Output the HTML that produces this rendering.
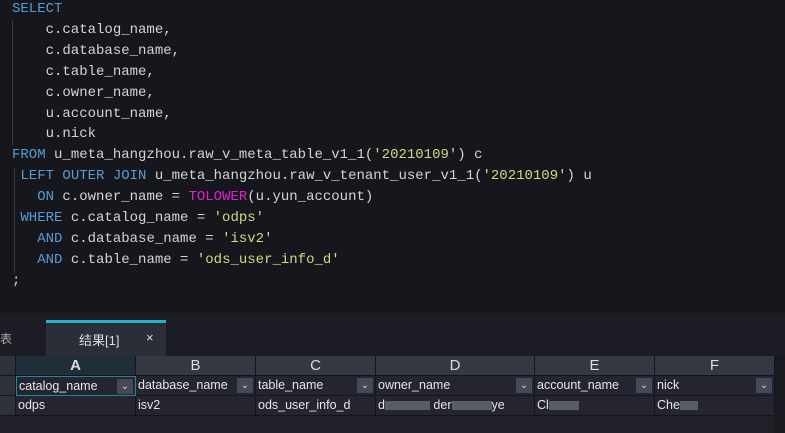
<!DOCTYPE html>
<html><head><meta charset="utf-8"><style>
*{margin:0;padding:0;box-sizing:border-box}
body{width:785px;height:433px;background:#16171c;overflow:hidden;position:relative;font-family:"Liberation Sans","Noto Sans CJK SC",sans-serif}
pre{position:absolute;left:12px;top:-1px;font-family:"Liberation Mono",monospace;font-size:14px;line-height:20.9px;color:#d4d4d4}
.k{color:#569cd6}.s{color:#d7d780}.f{color:#e31ed6}
.guide{position:absolute;left:12px;width:1px;background:#3a3b42}
.panel{position:absolute;left:0;top:313px;width:785px;height:120px;background:#1f2028}
.tabbar{position:absolute;left:0;top:313px;width:785px;height:43px;background:#1c1d24}
.tab{position:absolute;left:46px;top:320px;width:120px;height:36px;background:#2b2d37;border-top:3px solid #1fb3d0;color:#ddd;font-size:13px}
.cell{position:absolute;font-size:12.5px;color:#e6e6e6;border-right:1px solid #14151a;border-bottom:1px solid #14151a;padding-left:2px;line-height:19px;white-space:nowrap;overflow:hidden}
.hd{background:#353743;text-align:center;font-size:15px;color:#ddd;padding:0}
.r{background:#242530}
.dd{position:absolute;right:2px;top:2px;width:16px;height:15px;background:#454855;color:#ddd;font-size:10px;text-align:center;line-height:15px}
.blur{display:inline-block;background:#5a5d66;height:9px;vertical-align:middle}
</style></head><body>
<div class="guide" style="top:20px;height:125px"></div>
<div class="guide" style="top:168px;height:105px;left:14px"></div>
<pre><span class="k">SELECT</span>
    c.catalog_name,
    c.database_name,
    c.table_name,
    c.owner_name,
    u.account_name,
    u.nick
<span class="k">FROM</span> u_meta_hangzhou.raw_v_meta_table_v1_1(<span class="s">'20210109'</span>) c
 <span class="k">LEFT OUTER JOIN</span> u_meta_hangzhou.raw_v_tenant_user_v1_1(<span class="s">'20210109'</span>) u
   <span class="k">ON</span> c.owner_name = <span class="f">TOLOWER</span>(u.yun_account)
 <span class="k">WHERE</span> c.catalog_name = <span class="s">'odps'</span>
   <span class="k">AND</span> c.database_name = <span class="s">'isv2'</span>
   <span class="k">AND</span> c.table_name = <span class="s">'ods_user_info_d'</span>
;</pre>
<div class="panel"></div>
<div class="tabbar"></div>
<div style="position:absolute;left:0;top:330px;color:#aaa;font-size:12px">表</div>
<div class="tab"><span style="position:absolute;left:33px;top:7px">结果[1]</span><span style="position:absolute;left:100px;top:7px">×</span></div>
<div class="cell hd" style="left:0;top:356px;width:16px;height:20px;background:#2f313b"></div>
<div class="cell hd" style="left:16px;top:356px;width:120px;height:20px;background:#1f2e38;font-weight:bold">A</div>
<div class="cell hd" style="left:136px;top:356px;width:120px;height:20px">B</div>
<div class="cell hd" style="left:256px;top:356px;width:120px;height:20px">C</div>
<div class="cell hd" style="left:376px;top:356px;width:159px;height:20px">D</div>
<div class="cell hd" style="left:535px;top:356px;width:120px;height:20px">E</div>
<div class="cell hd" style="left:655px;top:356px;width:120px;height:20px">F</div>
<div class="cell r" style="left:0;top:376px;width:16px;height:20px;background:#2f313b"></div>
<div class="cell r" style="left:16px;top:376px;width:120px;height:20px;border:1px solid #1d8a9c">catalog_name<span class="dd">⌄</span></div>
<div class="cell r" style="left:136px;top:376px;width:120px;height:20px">database_name<span class="dd">⌄</span></div>
<div class="cell r" style="left:256px;top:376px;width:120px;height:20px">table_name<span class="dd">⌄</span></div>
<div class="cell r" style="left:376px;top:376px;width:159px;height:20px">owner_name<span class="dd">⌄</span></div>
<div class="cell r" style="left:535px;top:376px;width:120px;height:20px">account_name<span class="dd">⌄</span></div>
<div class="cell r" style="left:655px;top:376px;width:120px;height:20px">nick<span class="dd">⌄</span></div>
<div class="cell r" style="left:0;top:396px;width:16px;height:20px;background:#2f313b"></div>
<div class="cell r" style="left:16px;top:396px;width:120px;height:20px">odps</div>
<div class="cell r" style="left:136px;top:396px;width:120px;height:20px">isv2</div>
<div class="cell r" style="left:256px;top:396px;width:120px;height:20px">ods_user_info_d</div>
<div class="cell r" style="left:376px;top:396px;width:159px;height:20px">d<span class="blur" style="width:45px"></span> der<span class="blur" style="width:40px"></span>ye</div>
<div class="cell r" style="left:535px;top:396px;width:120px;height:20px">Cl<span class="blur" style="width:30px"></span></div>
<div class="cell r" style="left:655px;top:396px;width:120px;height:20px">Che<span class="blur" style="width:18px"></span></div>
<div style="position:absolute;left:775px;top:356px;width:10px;height:77px;background:#1a1b21"></div>
</body></html>
